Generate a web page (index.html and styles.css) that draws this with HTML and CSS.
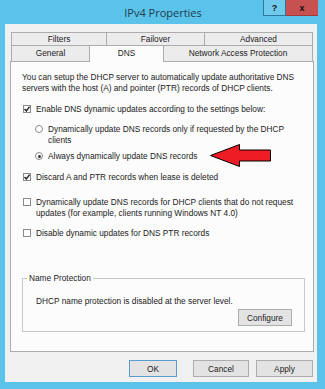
FILE: index.html
```html
<!DOCTYPE html>
<html lang="en">
<head>
    <meta charset="UTF-8">
    <meta name="viewport" content="width=device-width, initial-scale=1.0">
    <title>IPv4 Properties</title>
    <link rel="stylesheet" href="styles.css">
</head>
<body>
    <div class="window">
        <div class="titlebar">
            <span class="title">IPv4 Properties</span>
            <div class="caption-btns">
                <span class="help">?</span>
                <span class="close">x</span>
            </div>
        </div>
        <div class="dialog">
            <div class="tabs">
                <div class="tab-row">
                    <div class="tab w-filters">Filters</div>
                    <div class="tab w-failover">Failover</div>
                    <div class="tab w-advanced">Advanced</div>
                </div>
                <div class="tab-row front">
                    <div class="tab w-general">General</div>
                    <div class="tab w-dns active">DNS</div>
                    <div class="tab w-nap">Network Access Protection</div>
                </div>
            </div>
            <div class="panel">
                <p class="intro">You can setup the DHCP server to automatically update authoritative DNS<br>servers with the host (A) and pointer (PTR) records of DHCP clients.</p>

                <div class="option m-enable">
                    <span class="check checked"><svg width="6" height="6" viewBox="0 0 6 6"><path d="M0.5 3 L2.3 5 L5.6 0.6" fill="none" stroke="#222" stroke-width="1.4"/></svg></span>
                    <span class="label">Enable DNS dynamic updates according to the settings below:</span>
                </div>
                <div class="option sub m-radio1">
                    <span class="radio"></span>
                    <span class="label">Dynamically update DNS records only if requested by the DHCP<br>clients</span>
                </div>
                <div class="option sub m-radio2">
                    <span class="radio selected"></span>
                    <span class="label">Always dynamically update DNS records</span>
                </div>
                <div class="option m-discard">
                    <span class="check checked"><svg width="6" height="6" viewBox="0 0 6 6"><path d="M0.5 3 L2.3 5 L5.6 0.6" fill="none" stroke="#222" stroke-width="1.4"/></svg></span>
                    <span class="label">Discard A and PTR records when lease is deleted</span>
                </div>
                <div class="option m-dyn">
                    <span class="check"></span>
                    <span class="label">Dynamically update DNS records for DHCP clients that do not request<br>updates (for example, clients running Windows NT 4.0)</span>
                </div>
                <div class="option m-disable">
                    <span class="check"></span>
                    <span class="label">Disable dynamic updates for DNS PTR records</span>
                </div>

                <fieldset class="group">
                    <legend>Name Protection</legend>
                    <p class="group-text">DHCP name protection is disabled at the server level.</p>
                    <div class="group-actions">
                        <button class="btn configure">Configure</button>
                    </div>
                </fieldset>

                <!-- red callout arrow pointing at the selected option -->
                <svg class="arrow" width="64" height="27" viewBox="0 0 64 27">
                    <polygon points="1.5,13.5 30.5,2.5 30.5,8 61.5,8 61.5,19 30.5,19 30.5,24.5" fill="#ee1c24" stroke="#000" stroke-width="1"/>
                </svg>
            </div>
            <div class="actions">
                <button class="btn ok">OK</button>
                <button class="btn cancel">Cancel</button>
                <button class="btn apply">Apply</button>
            </div>
        </div>
    </div>
</body>
</html>
```
FILE: styles.css
```css
html, body {
    margin: 0;
    padding: 0;
}
body {
    background-color: #5bc3ea;
    font-family: "Liberation Sans", Arial, sans-serif;
    font-size: 8.3px;
    color: #1b1b1b;
}
.window {
    width: 325px;
    height: 389px;
    background-color: #5bc3ea;
}

/* title bar */
.titlebar {
    height: 24px;
    display: grid;
    grid-template-columns: 1fr auto 1fr;
}
.title {
    grid-column: 2;
    align-self: center;
    font-family: "Open Sans", sans-serif;
    font-size: 11px;
    color: #1d3c4c;
    padding-left: 1px;
}
.caption-btns {
    grid-column: 3;
    justify-self: end;
    display: flex;
    margin-right: 7px;
    height: 16px;
}
.help, .close {
    display: flex;
    align-items: center;
    justify-content: center;
    font-weight: bold;
    font-size: 9px;
    color: #111;
    box-sizing: border-box;
}
.help {
    width: 23px;
    background-color: #6fcaec;
    border: 1px solid #2a7aa0;
    border-top: none;
}
.close {
    width: 32px;
    background-color: #c75050;
    border-bottom: 1px solid #a33a3a;
}

/* dialog body */
.dialog {
    margin-left: 5px;
    width: 312px;
    height: 358px;
    background-color: #f0f0f0;
    padding-top: 8px;
    box-sizing: border-box;
}
.tabs {
    padding-left: 6px;
}
.tab-row {
    display: flex;
}
.tab {
    box-sizing: border-box;
    height: 13px;
    line-height: 12px;
    text-align: center;
    border: 1px solid #acacac;
    border-bottom: none;
    margin-left: -1px;
    background-color: #ececec;
}
.tab:first-child {
    margin-left: 0;
}
.tab-row.front .tab {
    height: 16px;
    line-height: 15px;
}
.tab-row.front .tab.active {
    height: 17px;
    margin-bottom: -1px;
    background-color: #fcfcfc;
    position: relative;
    z-index: 1;
}
.w-filters { width: 96px; }
.w-failover { width: 99px; }
.w-advanced { width: 109px; }
.w-general { width: 79px; }
.w-dns { width: 75px; }
.w-nap { width: 150px; }

.panel {
    position: relative;
    margin-left: 5px;
    width: 304px;
    height: 291px;
    box-sizing: border-box;
    border: 1px solid #acacac;
    background-color: #fcfcfc;
    padding: 10px 8px 0 11px;
}
.intro {
    margin: 0;
    line-height: 11px;
}
.option {
    display: flex;
    align-items: flex-start;
    line-height: 11px;
}
.option.sub {
    padding-left: 13px;
}
.m-enable { margin-top: 10px; }
.m-radio1 { margin-top: 9px; }
.m-radio2 { margin-top: 5px; }
.m-discard { margin-top: 10px; }
.m-dyn { margin-top: 14px; }
.m-disable { margin-top: 9px; }

.check, .radio {
    flex: none;
    width: 8px;
    height: 8px;
    margin: 1px 5px 0 1px;
    box-sizing: border-box;
    border: 1px solid #8a8a8a;
    background-color: #fff;
    display: flex;
    align-items: center;
    justify-content: center;
}
.radio {
    border-radius: 50%;
    margin-left: 0;
    margin-right: 5px;
}
.radio.selected::after {
    content: "";
    width: 3px;
    height: 3px;
    border-radius: 50%;
    background-color: #333;
}

.group {
    margin: 34px 0 0 0;
    padding: 0 12px 5px 13px;
    border: 1px solid #c8c8c8;
}
.group legend {
    padding: 0 2px;
    margin-left: -9px;
    line-height: 11px;
}
.group-text {
    margin: 12px 0 0 0;
    line-height: 11px;
}
.group-actions {
    display: flex;
    justify-content: flex-end;
    margin-top: 2px;
}

.btn {
    font-family: "Liberation Sans", Arial, sans-serif;
    font-size: 8.3px;
    color: #1b1b1b;
    height: 17px;
    padding: 0;
    background-color: #e3e3e3;
    border: 1px solid #adadad;
    border-radius: 0;
}
.configure { width: 54px; }

.actions {
    display: flex;
    justify-content: flex-end;
    padding-right: 4px;
    margin-top: 8px;
}
.ok {
    width: 48px;
    border-color: #5a9ccc;
}
.cancel {
    width: 56px;
    margin-left: 16px;
}
.apply {
    width: 57px;
    margin-left: 7px;
}

.arrow {
    position: absolute;
    left: 198px;
    top: 80px;
}
```
